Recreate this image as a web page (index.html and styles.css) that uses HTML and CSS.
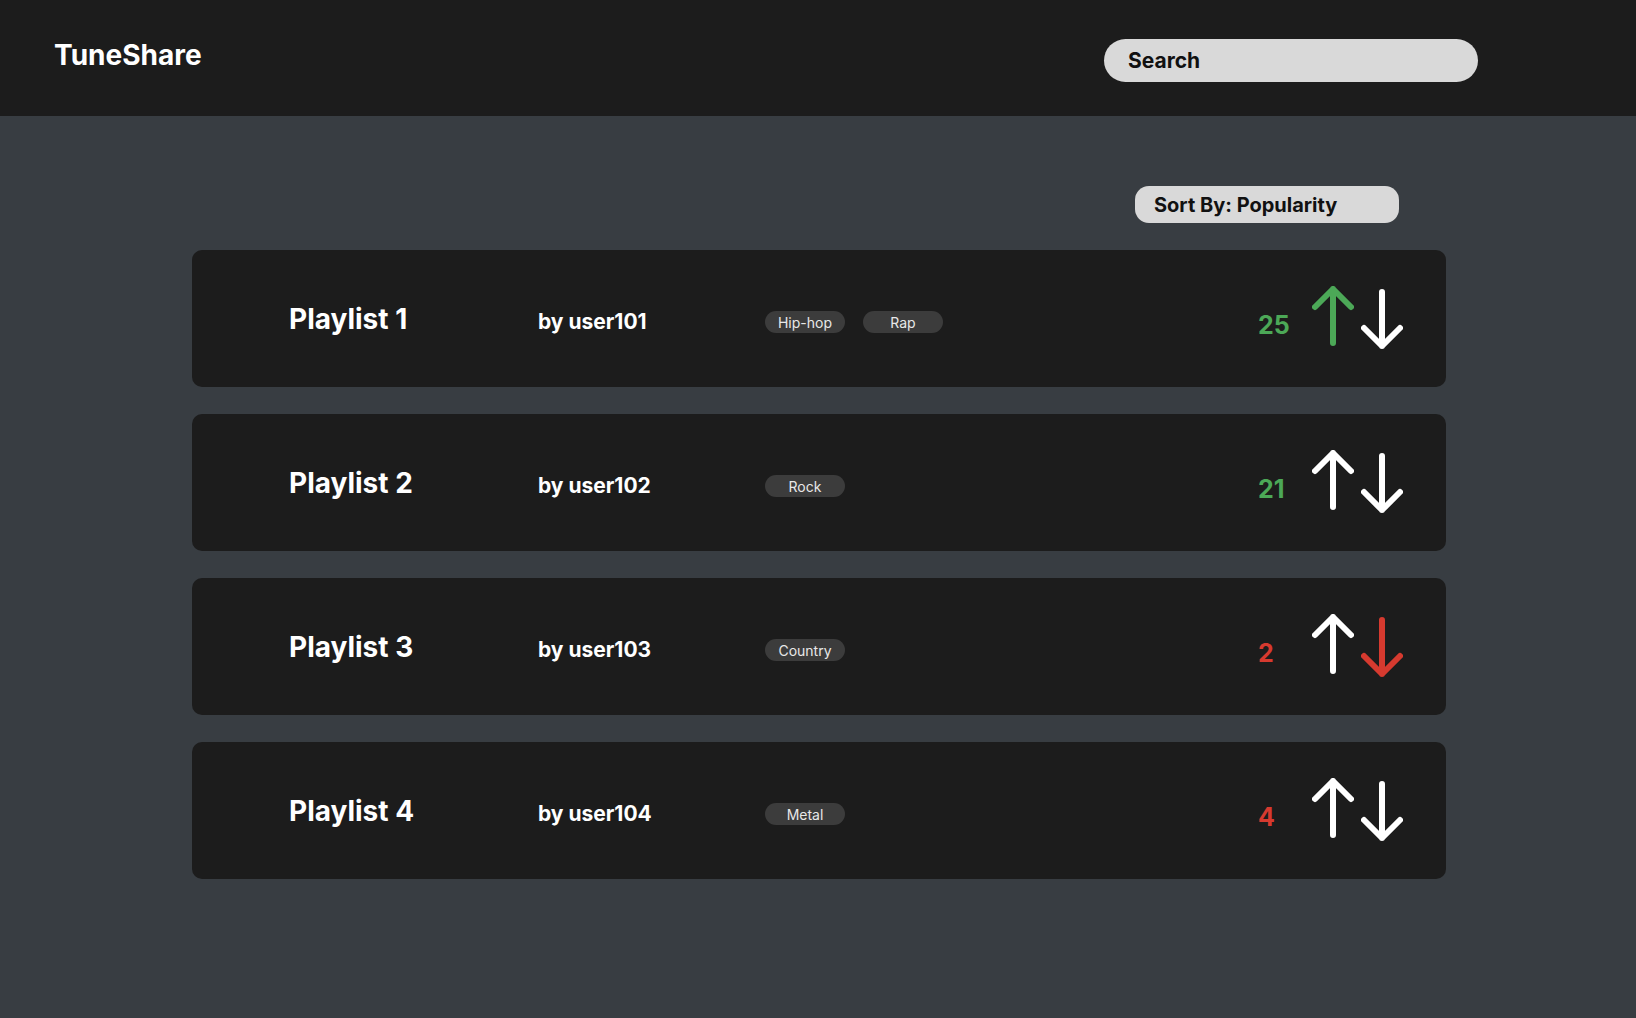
FILE: index.html
```html
<!DOCTYPE html>
<html lang="en">
<head>
<meta charset="utf-8">
<title>TuneShare</title>
<link rel="stylesheet" href="styles.css">
</head>
<body>
<header class="topbar">
  <div class="logo">TuneShare</div>
  <div class="search">Search</div>
</header>
<main class="content">
  <div class="sort-row">
    <div class="sort">Sort By: Popularity</div>
  </div>
  <div class="list">
    <div class="card">
      <div class="title">Playlist 1</div>
      <div class="author">by user101</div>
      <div class="tags"><span class="tag">Hip-hop</span><span class="tag">Rap</span></div>
      <div class="score pos">25</div>
      <div class="votes">
        <svg class="arrow up green" viewBox="0 0 42 60"><path d="M21 57V3M3 21L21 3L39 21"/></svg>
        <svg class="arrow down white" viewBox="0 0 42 60"><path d="M21 3V57M3 39L21 57L39 39"/></svg>
      </div>
    </div>
    <div class="card">
      <div class="title">Playlist 2</div>
      <div class="author">by user102</div>
      <div class="tags"><span class="tag">Rock</span></div>
      <div class="score pos">21</div>
      <div class="votes">
        <svg class="arrow up white" viewBox="0 0 42 60"><path d="M21 57V3M3 21L21 3L39 21"/></svg>
        <svg class="arrow down white" viewBox="0 0 42 60"><path d="M21 3V57M3 39L21 57L39 39"/></svg>
      </div>
    </div>
    <div class="card">
      <div class="title">Playlist 3</div>
      <div class="author">by user103</div>
      <div class="tags"><span class="tag">Country</span></div>
      <div class="score neg">2</div>
      <div class="votes">
        <svg class="arrow up white" viewBox="0 0 42 60"><path d="M21 57V3M3 21L21 3L39 21"/></svg>
        <svg class="arrow down red" viewBox="0 0 42 60"><path d="M21 3V57M3 39L21 57L39 39"/></svg>
      </div>
    </div>
    <div class="card">
      <div class="title">Playlist 4</div>
      <div class="author">by user104</div>
      <div class="tags"><span class="tag">Metal</span></div>
      <div class="score neg">4</div>
      <div class="votes">
        <svg class="arrow up white" viewBox="0 0 42 60"><path d="M21 57V3M3 21L21 3L39 21"/></svg>
        <svg class="arrow down white" viewBox="0 0 42 60"><path d="M21 3V57M3 39L21 57L39 39"/></svg>
      </div>
    </div>
  </div>
</main>
</body>
</html>
```

FILE: styles.css
```css
* { box-sizing: border-box; }
html, body { margin: 0; padding: 0; }
body {
  background: #383d42;
  font-family: Inter, "Noto Sans", "Liberation Sans", sans-serif;
  color: #ffffff;
  min-height: 1018px;
}
.topbar {
  height: 116px;
  background: #1c1c1c;
  display: flex;
  justify-content: space-between;
  align-items: flex-start;
  padding: 0 158px 0 54px;
}
.logo {
  margin-top: 38px;
  font-size: 28px;
  line-height: 34px;
  font-weight: 700;
  color: #ffffff;
}
.search {
  margin-top: 39px;
  width: 374px;
  height: 43px;
  border-radius: 22px;
  background: #d9d9d9;
  color: #111111;
  font-size: 21px;
  font-weight: 700;
  display: flex;
  align-items: center;
  padding-left: 24px;
}
.content {
  width: 1254px;
  margin: 0 0 0 192px;
  padding-top: 70px;
}
.sort-row {
  display: flex;
  justify-content: flex-end;
  padding-right: 47px;
  margin-bottom: 27px;
}
.sort {
  width: 264px;
  height: 37px;
  border-radius: 14px;
  background: #d9d9d9;
  color: #111111;
  font-size: 20px;
  font-weight: 700;
  display: flex;
  align-items: center;
  padding-left: 19px;
}
.list {
  display: flex;
  flex-direction: column;
  gap: 27px;
}
.card {
  height: 137px;
  background: #1c1c1c;
  border-radius: 10px;
  display: grid;
  grid-template-columns: 249px 227px 1fr 54px auto;
  align-items: center;
  padding: 0 43px 0 97px;
}
.title {
  font-size: 28px;
  font-weight: 700;
}
.author {
  font-size: 21px;
  font-weight: 700;
  margin-top: 5px;
}
.tags {
  display: flex;
  gap: 18px;
  margin-top: 7px;
}
.tag {
  width: 80px;
  height: 22px;
  border-radius: 11px;
  background: #3c3c3c;
  color: #e8e8e8;
  font-size: 14px;
  display: flex;
  align-items: center;
  justify-content: center;
}
.score {
  font-size: 25px;
  font-weight: 700;
  margin-top: 13px;
}
.score.pos { color: #4ca857; }
.score.neg { color: #d63a2f; }
.votes {
  display: flex;
  align-items: flex-start;
  gap: 7px;
  height: 63px;
  margin-top: -3px;
}
.arrow {
  width: 42px;
  height: 60px;
  fill: none;
  stroke-width: 6;
  stroke-linecap: round;
  stroke-linejoin: round;
}
.arrow.down { margin-top: 3px; }
.arrow.white { stroke: #ffffff; }
.arrow.green { stroke: #4ca857; }
.arrow.red { stroke: #d63a2f; }
```
